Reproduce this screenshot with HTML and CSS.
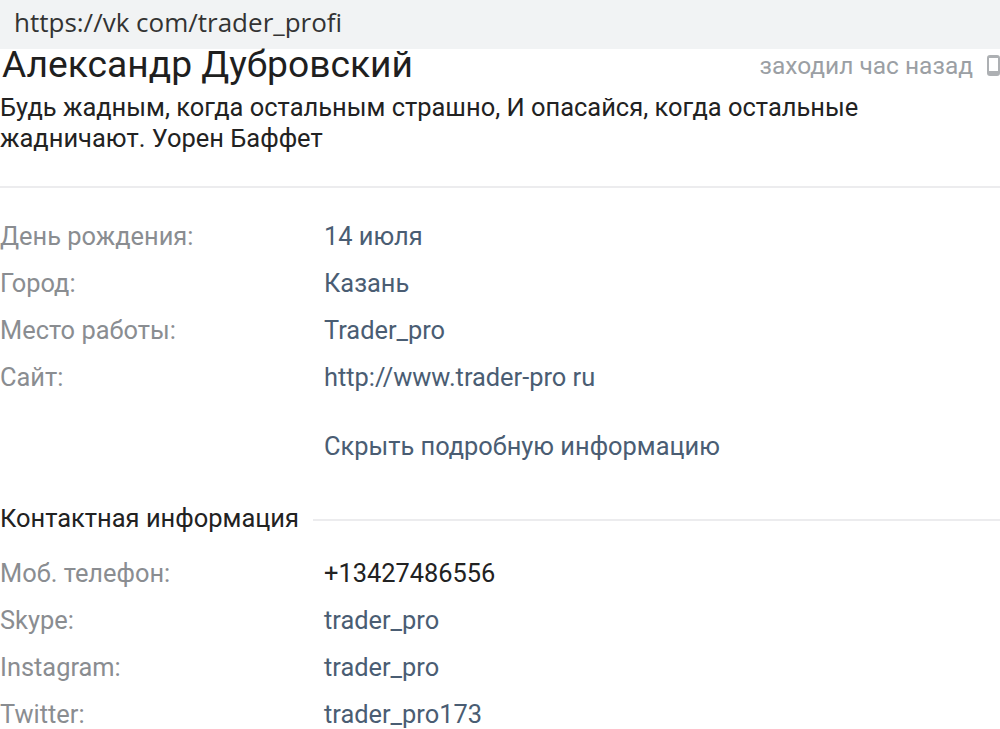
FILE: index.html
```html
<!DOCTYPE html>
<html lang="ru">
<head>
<meta charset="utf-8">
<title>Александр Дубровский</title>
<link rel="stylesheet" href="styles.css">
</head>
<body>
<div class="urlbar">https://vk com/trader_profi</div>
<main class="page">
  <header class="head">
    <h1 class="name">Александр Дубровский</h1>
    <div class="online">заходил час назад
      <svg class="phone" width="13" height="21" viewBox="0 0 13 21"><path fill-rule="evenodd" fill="#adb0b3" d="M3 0h7a3 3 0 0 1 3 3v15a3 3 0 0 1-3 3H3a3 3 0 0 1-3-3V3a3 3 0 0 1 3-3zM2 3v13h9V3z"/></svg>
    </div>
  </header>
  <p class="status">Будь жадным, когда остальным страшно, И опасайся, когда остальные жадничают. Уорен Баффет</p>
  <hr class="rule">
  <section class="rows first">
    <div class="row"><span class="label">День рождения:</span><span class="link">14 июля</span></div>
    <div class="row"><span class="label">Город:</span><span class="link">Казань</span></div>
    <div class="row"><span class="label">Место работы:</span><span class="link">Trader_pro</span></div>
    <div class="row"><span class="label">Сайт:</span><span class="link">http://www.trader-pro ru</span></div>
  </section>
  <div class="more"><span class="link">Скрыть подробную информацию</span></div>
  <div class="section-title"><span>Контактная информация</span><i class="line"></i></div>
  <section class="rows contacts">
    <div class="row"><span class="label">Моб. телефон:</span><span class="value">+13427486556</span></div>
    <div class="row"><span class="label">Skype:</span><span class="link">trader_pro</span></div>
    <div class="row"><span class="label">Instagram:</span><span class="link">trader_pro</span></div>
    <div class="row"><span class="label">Twitter:</span><span class="link">trader_pro173</span></div>
  </section>
</main>
</body>
</html>
```
FILE: styles.css
```css
html, body { margin: 0; padding: 0; background: #fff; }
body { width: 1000px; height: 729px; overflow: hidden; font-family: "Roboto", "Liberation Sans", sans-serif; color: #222; }
.urlbar { height: 49px; box-sizing: border-box; padding: 6px 0 0 14px; background: #f1f3f4; font-family: "Open Sans", sans-serif; font-size: 26px; line-height: 32px; color: #333; }
.page { display: flex; flex-direction: column; }
.head { display: flex; justify-content: space-between; align-items: center; height: 30px; padding-left: 2px; }
.name { margin: 0; font-size: 37.2px; font-weight: 400; line-height: 30px; color: #1f1f1f; }
.online { display: flex; align-items: center; gap: 14px; font-size: 24.5px; color: #9b9fa4; padding-top: 2px; }
.phone { flex: none; }
.status { margin: 13px 0 0; width: 900px; font-size: 25.46px; line-height: 31px; color: #222; }
.rule { margin: 32px 0 0; border: 0; height: 2px; background: #ececee; }
.rows { display: flex; flex-direction: column; }
.row { display: flex; height: 47px; align-items: center; font-size: 25.4px; }
.first { margin-top: 24px; }
.contacts { margin-top: 8px; }
.label { width: 324px; flex: none; color: #8a8d91; }
.link { color: #4a5d73; }
.value { color: #222; }
.more { margin-top: 22px; height: 47px; display: flex; align-items: center; padding-left: 324px; font-size: 25.4px; }
.section-title { display: flex; align-items: center; gap: 14px; margin-top: 25px; height: 47px; font-size: 25.46px; color: #222; }
.line { flex: 1; height: 2px; margin-top: 5px; background: #ececee; }
```
